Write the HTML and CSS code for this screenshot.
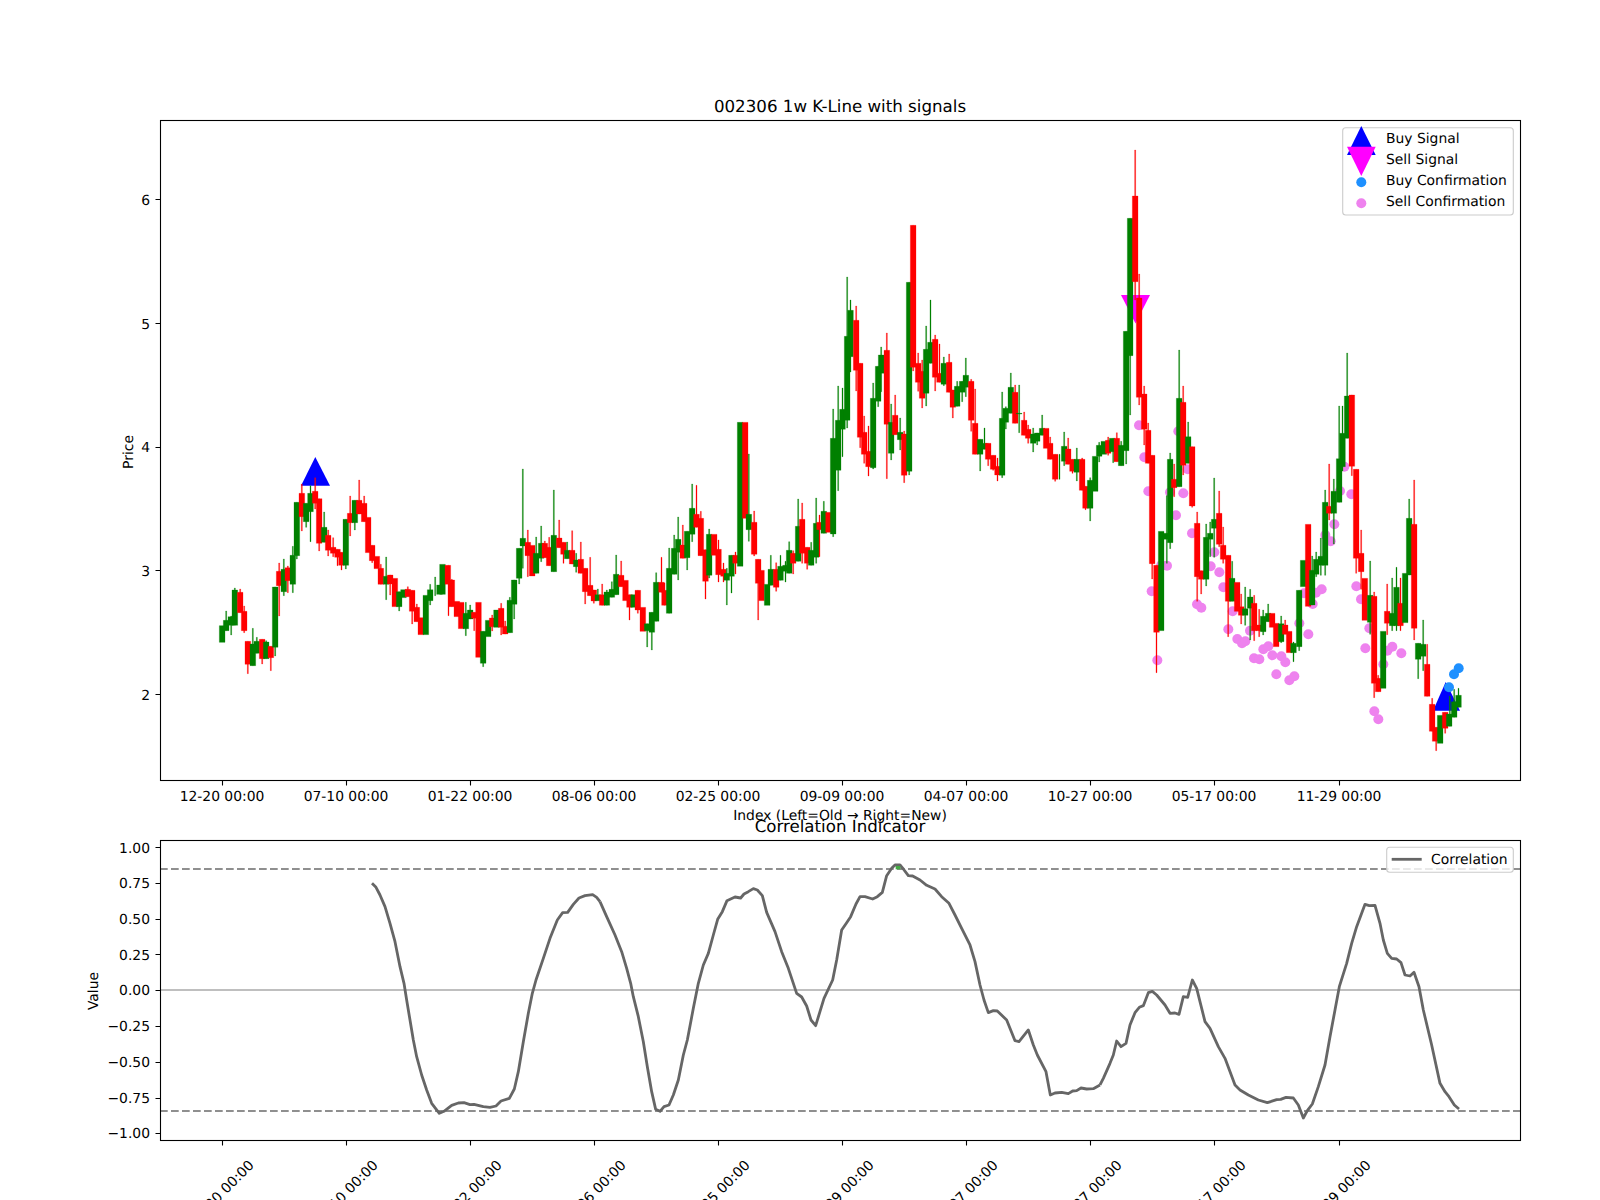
FILE: index.html
```html
<!DOCTYPE html>
<html lang="en">
<head>
<meta charset="utf-8">
<title>002306 1w K-Line with signals</title>
<link rel="stylesheet" href="styles.css">
</head>
<body>
<svg class="figure" width="1600" height="1200" viewBox="0 0 1600 1200" xmlns="http://www.w3.org/2000/svg">
<!-- signal markers and sell confirmations lie under the candles -->
<polygon class="buy" points="315.3,457 301,485.7 330,485.7"/>
<polygon class="sell" points="1121,295 1150,295 1135.5,323.5"/>
<polygon class="buy" points="1445.7,682 1433,710.7 1460,710.7"/>
<g class="pink" transform="translate(1090 400) scale(.33333)">
<circle cx="147" cy="76" r="15"/><circle cx="163" cy="172" r="15"/><circle cx="175" cy="274" r="15"/><circle cx="240" cy="277" r="15"/><circle cx="258" cy="346" r="15"/><circle cx="280" cy="280" r="15"/><circle cx="293" cy="208" r="15"/><circle cx="265" cy="94" r="15"/><circle cx="306" cy="400" r="15"/><circle cx="373" cy="457" r="15"/><circle cx="362" cy="499" r="15"/><circle cx="388" cy="517" r="15"/><circle cx="214" cy="495" r="15"/><circle cx="231" cy="497" r="15"/><circle cx="185" cy="574" r="15"/><circle cx="202" cy="781" r="15"/><circle cx="321" cy="613" r="15"/><circle cx="334" cy="623" r="15"/><circle cx="400" cy="562" r="15"/><circle cx="428" cy="634" r="15"/><circle cx="415" cy="688" r="15"/><circle cx="442" cy="717" r="15"/><circle cx="456" cy="730" r="15"/><circle cx="466" cy="724" r="15"/><circle cx="480" cy="692" r="15"/><circle cx="492" cy="775" r="15"/><circle cx="508" cy="778" r="15"/><circle cx="520" cy="748" r="15"/><circle cx="535" cy="739" r="15"/><circle cx="547" cy="766" r="15"/><circle cx="574" cy="769" r="15"/><circle cx="586" cy="787" r="15"/><circle cx="559" cy="823" r="15"/><circle cx="598" cy="841" r="15"/>
</g>
<g class="pink" transform="translate(1280 400) scale(.33333)">
<circle cx="193" cy="200" r="15"/><circle cx="180" cy="273" r="15"/><circle cx="214" cy="283" r="15"/><circle cx="163" cy="373" r="15"/><circle cx="136" cy="405" r="15"/><circle cx="152" cy="424" r="15"/><circle cx="229" cy="559" r="15"/><circle cx="243" cy="598" r="15"/><circle cx="125" cy="568" r="15"/><circle cx="108" cy="578" r="15"/><circle cx="98" cy="612" r="15"/><circle cx="72" cy="580" r="15"/><circle cx="58" cy="670" r="15"/><circle cx="85" cy="703" r="15"/><circle cx="268" cy="685" r="15"/><circle cx="256" cy="745" r="15"/><circle cx="322" cy="752" r="15"/><circle cx="337" cy="740" r="15"/><circle cx="364" cy="760" r="15"/><circle cx="310" cy="793" r="15"/><circle cx="283" cy="934" r="15"/><circle cx="295" cy="958" r="15"/><circle cx="43" cy="829" r="15"/>
</g>

<!-- candles, oldest first; each group is in 3x coordinates of its own origin -->
<g transform="translate(200 440) scale(.33333)">
<path class="g" d="M58 557h17V607h-17z"/>
<path class="g" d="M70 541h17V572h-17zM77 513h3V572h-3z"/>
<path class="g" d="M84 530h17V556h-17zM92 528h3V585h-3z"/>
<path class="g" d="M96 450h17V556h-17zM103 444h3V556h-3z"/>
<path class="r" d="M112 457h17V518h-17zM119 447h3V518h-3z"/>
<path class="r" d="M124 514h17V572h-17zM131 498h3V578h-3z"/>
<path class="r" d="M135 604h17V673h-17zM142 604h3V701h-3z"/>
<path class="g" d="M150 612h17V677h-17zM157 565h3V677h-3z"/>
<path class="g" d="M162 604h17V640h-17zM169 592h3V640h-3z"/>
<path class="r" d="M178 598h17V656h-17zM185 598h3V672h-3z"/>
<path class="g" d="M190 606h17V656h-17zM197 602h3V656h-3z"/>
<path class="r" d="M204 619h17V653h-17zM211 619h3V692h-3z"/>
<path class="g" d="M217 441h17V622h-17zM224 441h3V648h-3z"/>
<path class="r" d="M229 394h17V437h-17zM236 369h3V528h-3z"/>
<path class="g" d="M243 388h17V455h-17zM250 357h3V467h-3z"/>
<path class="r" d="M255 383h17V422h-17zM262 378h3V458h-3z"/>
<path class="g" d="M270 346h17V433h-17zM277 319h3V458h-3z"/>
<path class="g" d="M282 187h17V347h-17zM289 187h3V357h-3z"/>
<path class="r" d="M297 160h17V230h-17zM304 132h3V273h-3z"/>
<path class="g" d="M310 190h17V245h-17zM317 190h3V262h-3z"/>
<path class="g" d="M323 160h17V215h-17zM330 137h3V305h-3z"/>
<path class="r" d="M337 154h17V190h-17zM344 113h3V207h-3z"/>
<path class="r" d="M349 176h17V310h-17zM356 176h3V333h-3z"/>
<path class="g" d="M364 262h17V307h-17zM371 216h3V307h-3z"/>
<path class="r" d="M376 286h17V331h-17zM383 270h3V348h-3z"/>
<path class="r" d="M391 322h17V340h-17zM398 293h3V350h-3z"/>
<path class="r" d="M404 328h17V352h-17zM411 328h3V377h-3z"/>
<path class="r" d="M416 337h17V376h-17zM423 337h3V390h-3z"/>
<path class="g" d="M429 238h17V376h-17zM436 238h3V387h-3z"/>
<path class="r" d="M442 220h17V248h-17zM449 168h3V288h-3z"/>
<path class="g" d="M456 181h17V248h-17zM463 181h3V270h-3z"/>
<path class="r" d="M469 181h17V222h-17zM476 120h3V222h-3z"/>
<path class="r" d="M484 190h17V245h-17zM491 168h3V245h-3z"/>
<path class="r" d="M496 232h17V338h-17z"/>
<path class="r" d="M508 316h17V362h-17zM515 316h3V368h-3z"/>
<path class="r" d="M522 349h17V386h-17z"/>
<path class="r" d="M534 385h17V433h-17zM541 373h3V433h-3z"/>
<path class="g" d="M550 409h17V433h-17zM557 351h3V479h-3z"/>
<path class="r" d="M562 405h17V432h-17zM569 405h3V465h-3z"/>
<path class="r" d="M576 415h17V500h-17z"/>
<path class="g" d="M589 455h17V500h-17zM596 455h3V513h-3z"/>
<path class="g" d="M602 449h17V473h-17z"/>
<path class="r" d="M615 448h17V470h-17zM622 440h3V470h-3z"/>
<path class="r" d="M628 451h17V514h-17zM635 451h3V552h-3z"/>
<path class="r" d="M642 502h17V545h-17zM649 492h3V545h-3z"/>
<path class="r" d="M654 533h17V584h-17z"/>
<path class="g" d="M669 466h17V584h-17z"/>
<path class="g" d="M682 449h17V482h-17zM689 433h3V495h-3z"/>
<path class="g" d="M704 411h3V467h-3z"/>
<path class="g" d="M710 435h17V463h-17z"/>
<path class="g" d="M719 373h17V463h-17z"/>
<path class="r" d="M735 376h17V433h-17zM744 376h3V527h-3z"/>
<path class="r" d="M747 420h17V500h-17zM754 418h3V500h-3z"/>
<path class="r" d="M762 484h17V530h-17z"/>
<path class="r" d="M775 487h17V566h-17z"/>
<path class="g" d="M789 520h17V566h-17zM796 487h3V587h-3z"/>
<path class="g" d="M802 510h17V537h-17zM809 495h3V537h-3z"/>
<path class="r" d="M814 517h17V535h-17zM821 517h3V572h-3z"/>
<path class="r" d="M827 487h17V652h-17z"/>
<path class="g" d="M841 574h17V670h-17zM848 574h3V680h-3z"/>
<path class="g" d="M856 541h17V590h-17z"/>
<path class="r" d="M868 534h17V560h-17zM875 525h3V573h-3z"/>
<path class="g" d="M881 510h17V562h-17z"/>
<path class="r" d="M895 505h17V562h-17zM902 490h3V585h-3z"/>
<path class="r" d="M907 559h17V582h-17zM914 543h3V582h-3z"/>
<path class="g" d="M921 481h17V578h-17zM928 472h3V578h-3z"/>
<path class="g" d="M934 420h17V493h-17zM941 420h3V537h-3z"/>
<path class="g" d="M949 325h17V415h-17zM956 325h3V432h-3z"/>
<path class="g" d="M960 295h17V318h-17zM967 87h3V385h-3z"/>
<path class="r" d="M975 307h17V347h-17zM982 270h3V410h-3z"/>
</g>
<g transform="translate(520 400) scale(.33333)">
<path class="r" d="M28 436h17V528h-17z"/>
<path class="g" d="M40 460h17V520h-17zM47 411h3V520h-3z"/>
<path class="g" d="M55 430h17V475h-17zM62 378h3V485h-3z"/>
<path class="r" d="M66 430h17V473h-17zM73 423h3V473h-3z"/>
<path class="r" d="M79 442h17V497h-17zM86 412h3V497h-3z"/>
<path class="g" d="M93 406h17V515h-17zM100 270h3V515h-3z"/>
<path class="r" d="M109 414h17V443h-17zM116 360h3V443h-3z"/>
<path class="r" d="M122 427h17V463h-17zM129 427h3V490h-3z"/>
<path class="g" d="M133 451h17V476h-17zM140 426h3V476h-3z"/>
<path class="r" d="M148 451h17V492h-17zM155 392h3V492h-3z"/>
<path class="g" d="M160 480h17V500h-17zM167 460h3V517h-3z"/>
<path class="r" d="M174 478h17V520h-17zM181 426h3V520h-3z"/>
<path class="r" d="M187 505h17V575h-17zM194 505h3V612h-3z"/>
<path class="r" d="M202 556h17V587h-17zM209 472h3V587h-3z"/>
<path class="r" d="M213 570h17V603h-17zM220 570h3V610h-3z"/>
<path class="g" d="M225 584h17V602h-17zM232 567h3V602h-3z"/>
<path class="r" d="M238 584h17V616h-17zM245 552h3V616h-3z"/>
<path class="g" d="M252 576h17V616h-17zM259 570h3V616h-3z"/>
<path class="g" d="M267 568h17V592h-17zM274 545h3V592h-3z"/>
<path class="g" d="M280 523h17V584h-17zM287 465h3V584h-3z"/>
<path class="r" d="M295 526h17V560h-17zM302 483h3V560h-3z"/>
<path class="r" d="M308 541h17V602h-17z"/>
<path class="r" d="M320 584h17V622h-17zM327 584h3V660h-3z"/>
<path class="g" d="M332 584h17V622h-17z"/>
<path class="r" d="M345 571h17V630h-17zM352 571h3V640h-3z"/>
<path class="r" d="M360 622h17V694h-17z"/>
<path class="g" d="M373 671h17V692h-17zM380 671h3V741h-3z"/>
<path class="g" d="M387 637h17V697h-17zM394 637h3V750h-3z"/>
<path class="g" d="M400 547h17V664h-17zM407 518h3V664h-3z"/>
<path class="r" d="M416 547h17V577h-17zM423 472h3V577h-3z"/>
<path class="r" d="M425 571h17V616h-17zM432 549h3V616h-3z"/>
<path class="g" d="M439 505h17V640h-17zM446 444h3V640h-3z"/>
<path class="g" d="M454 445h17V523h-17zM461 405h3V523h-3z"/>
<path class="g" d="M466 418h17V457h-17zM473 351h3V540h-3z"/>
<path class="r" d="M480 435h17V475h-17zM487 375h3V475h-3z"/>
<path class="g" d="M493 394h17V473h-17zM500 394h3V510h-3z"/>
<path class="g" d="M508 325h17V403h-17zM515 252h3V425h-3z"/>
<path class="r" d="M521 343h17V382h-17zM528 256h3V382h-3z"/>
<path class="r" d="M534 355h17V467h-17zM541 334h3V467h-3z"/>
<path class="r" d="M548 449h17V544h-17zM555 449h3V597h-3z"/>
<path class="g" d="M559 403h17V526h-17zM566 387h3V534h-3z"/>
<path class="r" d="M574 403h17V466h-17z"/>
<path class="r" d="M587 448h17V524h-17zM594 420h3V546h-3z"/>
<path class="r" d="M602 508h17V529h-17zM609 489h3V546h-3z"/>
<path class="g" d="M612 520h17V541h-17zM619 505h3V615h-3z"/>
<path class="g" d="M626 466h17V529h-17zM633 466h3V579h-3z"/>
<path class="r" d="M638 466h17V490h-17zM645 456h3V522h-3z"/>
<path class="g" d="M652 67h17V499h-17z"/>
<path class="r" d="M667 67h17V355h-17z"/>
<path class="g" d="M678 343h17V389h-17zM685 162h3V424h-3z"/>
<path class="r" d="M694 367h17V463h-17zM701 333h3V468h-3z"/>
<path class="r" d="M706 478h17V550h-17zM713 478h3V660h-3z"/>
<path class="r" d="M716 511h17V602h-17z"/>
<path class="g" d="M733 553h17V616h-17z"/>
<path class="g" d="M744 508h17V556h-17zM751 466h3V556h-3z"/>
<path class="r" d="M760 508h17V562h-17zM767 488h3V574h-3z"/>
<path class="g" d="M773 499h17V541h-17zM780 466h3V541h-3z"/>
<path class="g" d="M788 496h17V514h-17zM795 484h3V546h-3z"/>
<path class="g" d="M799 451h17V520h-17zM806 425h3V520h-3z"/>
<path class="r" d="M811 460h17V490h-17zM818 452h3V522h-3z"/>
<path class="g" d="M826 379h17V484h-17zM833 297h3V484h-3z"/>
<path class="r" d="M838 358h17V460h-17zM845 309h3V490h-3z"/>
<path class="r" d="M853 442h17V490h-17zM860 442h3V508h-3z"/>
<path class="g" d="M865 451h17V496h-17zM872 427h3V496h-3z"/>
<path class="g" d="M880 370h17V472h-17zM887 294h3V490h-3z"/>
<path class="r" d="M890 367h17V389h-17zM897 345h3V470h-3z"/>
<path class="g" d="M903 334h17V400h-17zM910 304h3V400h-3z"/>
<path class="r" d="M917 337h17V397h-17z"/>
</g>
<g transform="translate(780 210) scale(.33333)">
<path class="g" d="M151 685h17V972h-17zM158 597h3V980h-3z"/>
<path class="g" d="M166 631h17V781h-17zM173 528h3V842h-3z"/>
<path class="g" d="M179 598h17V658h-17zM186 534h3V740h-3z"/>
<path class="g" d="M193 379h17V631h-17zM200 201h3V654h-3z"/>
<path class="g" d="M203 301h17V440h-17zM210 270h3V486h-3z"/>
<path class="r" d="M220 331h17V481h-17zM227 288h3V543h-3z"/>
<path class="r" d="M232 460h17V682h-17zM239 460h3V713h-3z"/>
<path class="r" d="M244 667h17V733h-17zM251 618h3V760h-3z"/>
<path class="r" d="M257 724h17V770h-17zM264 648h3V798h-3z"/>
<path class="g" d="M271 565h17V773h-17zM278 519h3V777h-3z"/>
<path class="g" d="M286 469h17V574h-17zM293 469h3V590h-3z"/>
<path class="g" d="M295 435h17V490h-17zM302 411h3V545h-3z"/>
<path class="r" d="M312 421h17V643h-17zM319 369h3V806h-3z"/>
<path class="g" d="M325 637h17V730h-17zM332 582h3V750h-3z"/>
<path class="r" d="M337 616h17V674h-17zM344 555h3V674h-3z"/>
<path class="g" d="M352 667h17V689h-17zM359 624h3V720h-3z"/>
<path class="r" d="M364 672h17V796h-17zM371 663h3V818h-3z"/>
<path class="g" d="M379 217h17V784h-17zM386 217h3V795h-3z"/>
<path class="r" d="M391 46h17V472h-17zM398 46h3V483h-3z"/>
<path class="r" d="M406 460h17V517h-17zM413 429h3V544h-3z"/>
<path class="r" d="M418 484h17V565h-17zM425 450h3V594h-3z"/>
<path class="g" d="M430 418h17V550h-17zM437 348h3V588h-3z"/>
<path class="g" d="M443 397h17V460h-17zM450 270h3V460h-3z"/>
<path class="r" d="M457 388h17V502h-17zM464 375h3V543h-3z"/>
<path class="r" d="M470 490h17V517h-17zM477 402h3V517h-3z"/>
<path class="g" d="M483 460h17V523h-17zM490 441h3V527h-3z"/>
<path class="r" d="M499 457h17V547h-17zM506 432h3V547h-3z"/>
<path class="r" d="M510 540h17V592h-17zM517 540h3V624h-3z"/>
<path class="g" d="M523 529h17V589h-17zM530 514h3V589h-3z"/>
<path class="g" d="M538 514h17V547h-17zM545 514h3V575h-3z"/>
<path class="g" d="M549 496h17V532h-17zM556 444h3V560h-3z"/>
<path class="r" d="M565 514h17V631h-17zM572 508h3V664h-3z"/>
<path class="r" d="M577 640h17V733h-17zM584 537h3V733h-3z"/>
<path class="g" d="M592 688h17V733h-17zM599 688h3V783h-3z"/>
<path class="g" d="M605 700h17V718h-17zM612 654h3V718h-3z"/>
<path class="r" d="M616 700h17V748h-17zM623 700h3V767h-3z"/>
<path class="r" d="M631 736h17V778h-17zM638 736h3V781h-3z"/>
<path class="r" d="M644 769h17V795h-17zM651 744h3V813h-3z"/>
<path class="g" d="M658 625h17V796h-17zM665 546h3V803h-3z"/>
<path class="g" d="M669 595h17V637h-17zM676 590h3V657h-3z"/>
<path class="g" d="M684 532h17V610h-17zM691 489h3V610h-3z"/>
<path class="r" d="M697 547h17V640h-17zM704 525h3V640h-3z"/>
<path class="g" d="M709 610h17V612h-17zM716 525h3V668h-3z"/>
<path class="r" d="M724 631h17V676h-17zM731 606h3V676h-3z"/>
<path class="r" d="M736 658h17V685h-17zM743 645h3V700h-3z"/>
<path class="g" d="M751 672h17V700h-17zM758 654h3V726h-3z"/>
<path class="g" d="M763 669h17V694h-17zM770 669h3V705h-3z"/>
<path class="g" d="M778 655h17V676h-17zM785 615h3V676h-3z"/>
<path class="r" d="M790 655h17V715h-17z"/>
<path class="r" d="M802 700h17V748h-17zM809 681h3V748h-3z"/>
<path class="r" d="M817 733h17V808h-17zM824 733h3V814h-3z"/>
<path class="g" d="M837 733h3V808h-3z"/>
<path class="g" d="M844 709h17V754h-17zM851 666h3V767h-3z"/>
<path class="r" d="M856 717h17V763h-17zM863 684h3V763h-3z"/>
<path class="r" d="M869 748h17V784h-17zM876 748h3V790h-3z"/>
<path class="g" d="M882 748h17V787h-17zM889 714h3V813h-3z"/>
<path class="r" d="M898 748h17V841h-17zM905 744h3V841h-3z"/>
<path class="r" d="M908 829h17V895h-17zM915 829h3V899h-3z"/>
<path class="g" d="M922 811h17V895h-17zM929 803h3V933h-3z"/>
<path class="g" d="M937 739h17V844h-17z"/>
<path class="g" d="M949 706h17V739h-17zM956 697h3V756h-3z"/>
<path class="g" d="M963 694h17V733h-17z"/>
<path class="r" d="M976 691h17V730h-17zM983 681h3V736h-3z"/>
</g>
<g transform="translate(1090 400) scale(.33333)">
<path class="g" d="M58 115h17V155h-17zM68 115h3V188h-3z"/>
<path class="r" d="M72 115h17V185h-17zM79 98h3V185h-3z"/>
<path class="g" d="M85 136h17V197h-17zM92 124h3V197h-3z"/>
<path class="g" d="M100 -206h17V152h-17zM107 -206h3V192h-3z"/>
<path class="g" d="M112 -545h17V-133h-17zM119 -545h3V45h-3z"/>
<path class="r" d="M127 -612h17V-355h-17zM134 -750h3V-300h-3z"/>
<path class="r" d="M139 -306h17V-8h-17zM146 -378h3V15h-3z"/>
<path class="r" d="M154 -18h17V88h-17zM161 -42h3V135h-3z"/>
<path class="r" d="M166 91h17V190h-17zM173 69h3V190h-3z"/>
<path class="r" d="M178 166h17V491h-17zM185 166h3V537h-3z"/>
<path class="r" d="M191 496h17V697h-17zM198 496h3V818h-3z"/>
<path class="g" d="M205 394h17V692h-17z"/>
<path class="g" d="M220 400h17V418h-17zM229 287h3V490h-3z"/>
<path class="g" d="M232 178h17V428h-17zM239 159h3V446h-3z"/>
<path class="r" d="M244 238h17V263h-17zM251 192h3V290h-3z"/>
<path class="g" d="M259 -5h17V260h-17zM266 -150h3V260h-3z"/>
<path class="r" d="M271 7h17V196h-17zM278 -42h3V225h-3z"/>
<path class="g" d="M286 110h17V190h-17zM293 66h3V190h-3z"/>
<path class="r" d="M298 140h17V318h-17zM305 140h3V322h-3z"/>
<path class="r" d="M313 370h17V530h-17zM320 336h3V604h-3z"/>
<path class="r" d="M325 512h17V538h-17zM332 512h3V582h-3z"/>
<path class="g" d="M340 412h17V538h-17zM347 372h3V558h-3z"/>
<path class="g" d="M352 400h17V418h-17zM359 366h3V470h-3z"/>
<path class="g" d="M364 358h17V385h-17zM371 234h3V472h-3z"/>
<path class="r" d="M379 340h17V433h-17zM386 273h3V440h-3z"/>
<path class="r" d="M391 436h17V478h-17zM398 381h3V490h-3z"/>
<path class="r" d="M406 466h17V604h-17zM413 466h3V710h-3z"/>
<path class="g" d="M418 535h17V604h-17zM425 484h3V604h-3z"/>
<path class="r" d="M433 547h17V634h-17z"/>
<path class="r" d="M445 620h17V646h-17zM452 582h3V672h-3z"/>
<path class="g" d="M457 626h17V646h-17zM464 561h3V676h-3z"/>
<path class="g" d="M472 591h17V625h-17zM479 568h3V720h-3z"/>
<path class="r" d="M484 610h17V692h-17zM491 586h3V722h-3z"/>
<path class="r" d="M499 675h17V692h-17zM506 628h3V710h-3z"/>
<path class="g" d="M511 649h17V695h-17zM518 630h3V705h-3z"/>
<path class="g" d="M526 640h17V665h-17zM533 612h3V665h-3z"/>
<path class="r" d="M538 640h17V682h-17z"/>
<path class="r" d="M550 670h17V740h-17z"/>
<path class="g" d="M565 671h17V725h-17zM572 648h3V728h-3z"/>
<path class="r" d="M577 675h17V703h-17zM584 660h3V703h-3z"/>
<path class="r" d="M589 694h17V758h-17z"/>
</g>
<g transform="translate(1280 400) scale(.33333)">
<path class="g" d="M32 730h17V758h-17zM39 726h3V785h-3z"/>
<path class="g" d="M49 571h17V740h-17zM56 571h3V752h-3z"/>
<path class="g" d="M61 481h17V560h-17z"/>
<path class="r" d="M76 373h17V619h-17z"/>
<path class="g" d="M88 511h17V615h-17zM95 468h3V615h-3z"/>
<path class="g" d="M100 478h17V523h-17zM107 456h3V530h-3z"/>
<path class="g" d="M114 469h17V496h-17zM121 414h3V526h-3z"/>
<path class="g" d="M127 307h17V496h-17zM134 270h3V526h-3z"/>
<path class="r" d="M139 319h17V340h-17zM146 192h3V360h-3z"/>
<path class="g" d="M153 274h17V340h-17zM160 237h3V432h-3z"/>
<path class="g" d="M169 176h17V307h-17zM176 18h3V307h-3z"/>
<path class="g" d="M179 100h17V200h-17zM186 18h3V213h-3z"/>
<path class="g" d="M193 -12h17V115h-17zM200 -141h3V115h-3z"/>
<path class="r" d="M207 -15h17V199h-17zM214 -15h3V227h-3z"/>
<path class="r" d="M220 208h17V475h-17zM227 208h3V520h-3z"/>
<path class="r" d="M235 460h17V515h-17zM242 390h3V568h-3z"/>
<path class="r" d="M246 535h17V661h-17z"/>
<path class="g" d="M262 586h17V667h-17zM269 483h3V703h-3z"/>
<path class="r" d="M274 589h17V850h-17zM281 576h3V893h-3z"/>
<path class="r" d="M286 835h17V875h-17zM293 826h3V875h-3z"/>
<path class="g" d="M301 694h17V865h-17z"/>
<path class="r" d="M313 634h17V670h-17zM320 552h3V704h-3z"/>
<path class="g" d="M328 640h17V677h-17zM335 534h3V692h-3z"/>
<path class="g" d="M341 562h17V677h-17zM348 502h3V692h-3z"/>
<path class="r" d="M353 610h17V677h-17zM360 534h3V692h-3z"/>
<path class="g" d="M367 520h17V668h-17z"/>
<path class="g" d="M379 355h17V525h-17zM386 297h3V525h-3z"/>
<path class="r" d="M394 373h17V685h-17zM401 240h3V720h-3z"/>
<path class="g" d="M406 730h17V778h-17zM413 730h3V836h-3z"/>
<path class="g" d="M421 733h17V769h-17zM428 660h3V812h-3z"/>
<path class="r" d="M433 793h17V889h-17zM440 733h3V889h-3z"/>
<path class="r" d="M448 913h17V994h-17zM455 895h3V994h-3z"/>
<path class="r" d="M457 982h17V1024h-17zM467 982h3V1052h-3z"/>
<path class="g" d="M472 946h17V1030h-17z"/>
<path class="r" d="M487 937h17V985h-17zM494 937h3V1000h-3z"/>
<path class="g" d="M499 942h17V979h-17zM508 888h3V979h-3z"/>
<path class="g" d="M514 905h17V952h-17zM521 868h3V952h-3z"/>
<path class="g" d="M527 886h17V922h-17zM534 865h3V922h-3z"/>
</g>
<g class="blue">
<circle cx="1449" cy="687.3" r="5"/><circle cx="1454" cy="674.3" r="5"/><circle cx="1458.7" cy="668.3" r="5"/>
</g>

<!-- top axes frame, ticks, labels -->
<rect class="frame" x="160.5" y="120.5" width="1360" height="660"/>
<path class="tick" d="M222.5 780.5v5M346.5 780.5v5M470.5 780.5v5M594.5 780.5v5M718.5 780.5v5M842.5 780.5v5M966.5 780.5v5M1090.5 780.5v5M1214.5 780.5v5M1339.5 780.5v5"/>
<path class="tick" d="M160.5 199.5h-5M160.5 323.5h-5M160.5 447.5h-5M160.5 570.5h-5M160.5 694.5h-5"/>
<text class="t big mid" x="840" y="111.7">002306 1w K-Line with signals</text>
<g class="mid">
<text class="t" x="222" y="801">12-20 00:00</text>
<text class="t" x="346" y="801">07-10 00:00</text>
<text class="t" x="470" y="801">01-22 00:00</text>
<text class="t" x="594" y="801">08-06 00:00</text>
<text class="t" x="718" y="801">02-25 00:00</text>
<text class="t" x="842" y="801">09-09 00:00</text>
<text class="t" x="966" y="801">04-07 00:00</text>
<text class="t" x="1090" y="801">10-27 00:00</text>
<text class="t" x="1214" y="801">05-17 00:00</text>
<text class="t" x="1339" y="801">11-29 00:00</text>
<text class="t" x="840" y="820">Index (Left=Old → Right=New)</text>
</g>
<g class="end">
<text class="t" x="150" y="204.5">6</text>
<text class="t" x="150" y="328.5">5</text>
<text class="t" x="150" y="451.7">4</text>
<text class="t" x="150" y="575.7">3</text>
<text class="t" x="150" y="699.7">2</text>
</g>
<text class="t mid" transform="translate(133 452) rotate(-90)">Price</text>

<!-- top legend -->
<rect class="legend" x="1342.7" y="127.7" width="170.6" height="87.3" rx="3"/>
<polygon class="buy" points="1361.3,126 1347,155 1375.7,155"/>
<polygon class="sell" points="1347,146.7 1375.7,146.7 1361.3,176"/>
<circle class="blue" cx="1361.3" cy="182.3" r="5"/>
<circle class="pink" cx="1361.3" cy="203.3" r="5"/>
<text class="t" x="1386" y="143">Buy Signal</text>
<text class="t" x="1386" y="163.7">Sell Signal</text>
<text class="t" x="1386" y="185.2">Buy Confirmation</text>
<text class="t" x="1386" y="206">Sell Confirmation</text>

<!-- lower axes -->
<line class="zero" x1="160" y1="990" x2="1520" y2="990"/>
<line class="dash" x1="160" y1="869" x2="1520" y2="869"/>
<line class="dash" x1="160" y1="1111" x2="1520" y2="1111"/>
<g transform="translate(100 770) scale(.33333)">
<polyline class="corr" points="816,340 828,352 840,375 855,410 870,460 885,515 900,590 912,640 920,690 930,750 940,810 950,860 965,915 980,960 995,1000 1018,1030 1032,1024 1055,1006 1075,999 1092,998 1110,1004 1122,1003 1150,1010 1170,1012 1188,1008 1203,993 1228,985 1243,957 1255,905 1270,815 1285,730 1297,670 1308,630 1330,565 1350,505 1372,450 1388,428 1403,427 1420,403 1437,384 1455,377 1478,374 1490,382 1500,395"/>
</g>
<g transform="translate(600 770) scale(.33333)">
<polyline class="corr" points="0,395 20,440 45,495 65,545 80,595 92,640 100,680 115,740 130,815 142,890 155,965 167,1018 180,1024 192,1010 207,1005 220,975 235,930 250,855 262,810 280,715 295,640 310,585 325,550 340,495 353,448 367,425 381,392 392,387 405,381 422,384 432,372 445,365 460,356 472,360 487,377 500,427 525,485 545,545 565,595 590,670 605,681 620,708 633,750 647,767 672,685 698,630 710,570 725,480 740,458 752,440 768,402 780,380 795,380 818,387 832,380 847,367 860,317 875,295 885,285 900,285 910,297 925,317 938,318 960,330 980,346 1005,357 1025,380 1047,400 1065,435 1085,475 1110,525 1125,575 1140,645 1152,690 1165,728 1180,722 1192,723 1220,750 1245,812 1257,815 1285,780 1300,825 1312,855 1338,905 1351,975 1365,969 1385,967 1405,971 1418,963 1430,962 1443,954 1460,957 1480,956 1500,945"/>
<rect class="hit" x="887" y="288" width="14" height="10"/>
</g>
<g transform="translate(1050 770) scale(.33333)">
<polyline class="corr" points="150,945 160,925 180,880 190,855 200,813 213,830 228,820 240,765 255,728 268,712 280,707 295,668 307,664 320,675 345,705 360,730 375,729 387,733 400,680 413,682 427,630 440,655 465,755 480,775 505,830 525,865 555,945 570,960 595,975 625,990 652,998 680,989 692,988 708,982 730,984 745,1005 760,1044 772,1022 787,1002 805,950 825,885 840,800 855,720 868,650 890,580 905,520 920,470 945,403 958,407 975,406 990,460 1000,510 1012,550 1025,565 1040,567 1053,578 1065,615 1080,618 1092,607 1107,650 1120,720 1145,825 1170,940 1185,965 1197,980 1213,1005 1227,1017"/>
</g>
<rect class="frame" x="160.5" y="840.5" width="1360" height="300"/>
<path class="tick" d="M222.5 1140.5v5M346.5 1140.5v5M470.5 1140.5v5M594.5 1140.5v5M718.5 1140.5v5M842.5 1140.5v5M966.5 1140.5v5M1090.5 1140.5v5M1214.5 1140.5v5M1339.5 1140.5v5"/>
<path class="tick" d="M160.5 847.5h-5M160.5 883.5h-5M160.5 919.5h-5M160.5 954.5h-5M160.5 990.5h-5M160.5 1026.5h-5M160.5 1062.5h-5M160.5 1098.5h-5M160.5 1133.5h-5"/>
<text class="t big mid" x="840" y="831.7">Correlation Indicator</text>
<g class="end">
<text class="t" x="150" y="853">1.00</text>
<text class="t" x="150" y="888.2">0.75</text>
<text class="t" x="150" y="923.8">0.50</text>
<text class="t" x="150" y="959.5">0.25</text>
<text class="t" x="150" y="995.2">0.00</text>
<text class="t" x="150" y="1030.8">−0.25</text>
<text class="t" x="150" y="1066.7">−0.50</text>
<text class="t" x="150" y="1102.7">−0.75</text>
<text class="t" x="150" y="1138.4">−1.00</text>
<text class="t" transform="translate(254.8 1166) rotate(-45)">12-20 00:00</text>
<text class="t" transform="translate(378.8 1166) rotate(-45)">07-10 00:00</text>
<text class="t" transform="translate(502.8 1166) rotate(-45)">01-22 00:00</text>
<text class="t" transform="translate(626.8 1166) rotate(-45)">08-06 00:00</text>
<text class="t" transform="translate(750.8 1166) rotate(-45)">02-25 00:00</text>
<text class="t" transform="translate(874.8 1166) rotate(-45)">09-09 00:00</text>
<text class="t" transform="translate(998.8 1166) rotate(-45)">04-07 00:00</text>
<text class="t" transform="translate(1122.8 1166) rotate(-45)">10-27 00:00</text>
<text class="t" transform="translate(1246.8 1166) rotate(-45)">05-17 00:00</text>
<text class="t" transform="translate(1371.8 1166) rotate(-45)">11-29 00:00</text>
</g>
<text class="t mid" transform="translate(97.5 991) rotate(-90)">Value</text>

<!-- lower legend -->
<rect class="legend" x="1386.7" y="847.3" width="126.6" height="25" rx="3"/>
<line class="corr-key" x1="1391.7" y1="859.3" x2="1421.7" y2="859.3"/>
<text class="t" x="1431" y="864.3">Correlation</text>
</svg>
</body>
</html>
```

FILE: styles.css
```css
html, body {
  margin: 0;
  padding: 0;
  background: #fff;
}

.figure {
  display: block;
}

.t {
  font-family: "DejaVu Sans", sans-serif;
  font-size: 13.89px;
  fill: #000;
  text-rendering: geometricPrecision;
}

.t.big {
  font-size: 16.67px;
}

.mid, .mid .t {
  text-anchor: middle;
}

.end, .end .t {
  text-anchor: end;
}

.g {
  fill: #008000;
  stroke: #008000;
  stroke-width: 0.8;
}

.r {
  fill: #f00;
  stroke: #f00;
  stroke-width: 0.8;
}

.buy {
  fill: #00f;
}

.sell {
  fill: #f0f;
}

.pink {
  fill: #ee82ee;
}

.blue {
  fill: #1e90ff;
}

.frame {
  fill: none;
  stroke: #000;
  stroke-width: 1.1;
}

.tick {
  fill: none;
  stroke: #000;
  stroke-width: 1.1;
}

.legend {
  fill: #fff;
  fill-opacity: 0.8;
  stroke: #ccc;
  stroke-width: 1.1;
}

.zero {
  stroke: #aaa;
  stroke-width: 1.6;
}

.dash {
  stroke: #8f8f8f;
  stroke-width: 2;
  stroke-dasharray: 7.7 3.3;
}

.corr {
  fill: none;
  stroke: #666;
  stroke-width: 8.4;
  stroke-linejoin: round;
}

.corr-key {
  stroke: #666;
  stroke-width: 2.8;
}

.hit {
  fill: #4a4;
}
```
